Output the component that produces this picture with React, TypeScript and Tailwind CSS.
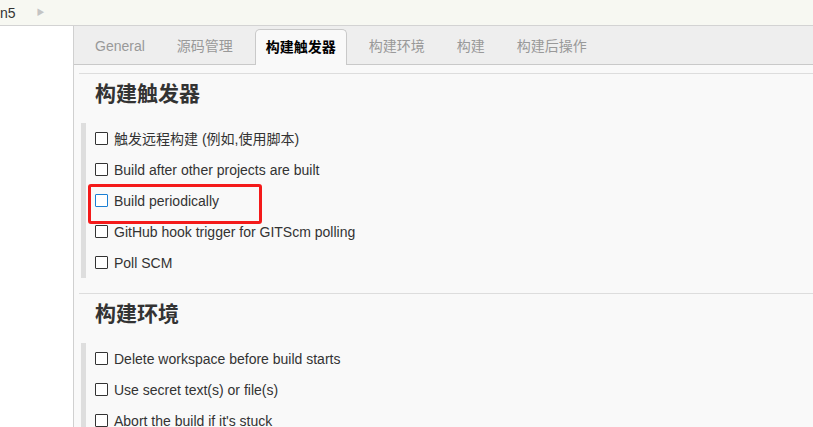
import React from "react";

const tabs = ["General", "源码管理", "构建触发器", "构建环境", "构建", "构建后操作"];

function Checkbox({ blue }: { blue?: boolean }) {
  return (
    <span
      className={
        "inline-block w-[13px] h-[13px] shrink-0 bg-white border rounded-[1px] " +
        (blue ? "border-[#1a7fd4]" : "border-[#333]")
      }
    />
  );
}

function Item({ label, blue }: { label: string; blue?: boolean }) {
  return (
    <div className="h-[31px] flex items-center gap-[6px] pl-[9px]">
      <Checkbox blue={blue} />
      <span className="text-[14px] text-[#333] leading-none">{label}</span>
    </div>
  );
}

function Section({ title, items }: { title: string; items: { label: string; blue?: boolean }[] }) {
  return (
    <div className="border-t border-[#dddddd]">
      <div className="pl-[16px] pt-[6px] text-[21px] font-bold text-[#333] leading-[28px] mb-[15px]">{title}</div>
      <div className="ml-[2px] border-l-[5px] border-[#dedede]">
        {items.map((it) => (
          <Item key={it.label} label={it.label} blue={it.blue} />
        ))}
      </div>
      <div className="h-[15px]" />
    </div>
  );
}

export default function App() {
  return (
    <div
      className="w-[813px] h-[427px] overflow-hidden bg-white flex flex-col"
      style={{ fontFamily: '"Liberation Sans", Arial, "Noto Sans CJK SC", sans-serif' }}
    >
      <div className="h-[26px] shrink-0 bg-[#f7f8f2] border-b border-[#d3d3d3] flex items-center">
        <span className="text-[14px] text-[#333] leading-none">n5</span>
        <span className="ml-[21px] text-[8px] text-[#c4c4c4] leading-none">▶</span>
      </div>
      <div className="flex flex-1 min-h-0">
        <div className="w-[74px] shrink-0 bg-white border-r border-[#d0d0d0]" />
        <div className="flex-1 bg-[#f9f9f9] flex flex-col relative">
          <div className="h-[39px] shrink-0 bg-[#eeeeee] border-b border-[#c9c9c9] flex items-end pl-[11px] gap-[12px]">
            {tabs.map((t, i) =>
              i === 2 ? (
                <div
                  key={t}
                  className="h-[36px] mb-[-1px] px-[10px] flex items-center bg-[#f9f9f9] border border-b-0 border-[#c9c9c9] rounded-t-[5px] text-[14px] text-black font-semibold"
                >
                  {t}
                </div>
              ) : (
                <div key={t} className="h-[35px] px-[10px] flex items-center text-[14px] text-[#999]">
                  {t}
                </div>
              )
            )}
          </div>
          <div className="pl-[5px] pt-[8px]">
            <Section
              title="构建触发器"
              items={[
                { label: "触发远程构建 (例如,使用脚本)" },
                { label: "Build after other projects are built" },
                { label: "Build periodically", blue: true },
                { label: "GitHub hook trigger for GITScm polling" },
                { label: "Poll SCM" },
              ]}
            />
            <Section
              title="构建环境"
              items={[
                { label: "Delete workspace before build starts" },
                { label: "Use secret text(s) or file(s)" },
                { label: "Abort the build if it's stuck" },
              ]}
            />
          </div>
          <div className="absolute left-[14px] top-[158px] w-[174px] h-[40px] border-[3px] border-[#f41a1a] rounded-[3px] pointer-events-none" />
        </div>
      </div>
    </div>
  );
}
